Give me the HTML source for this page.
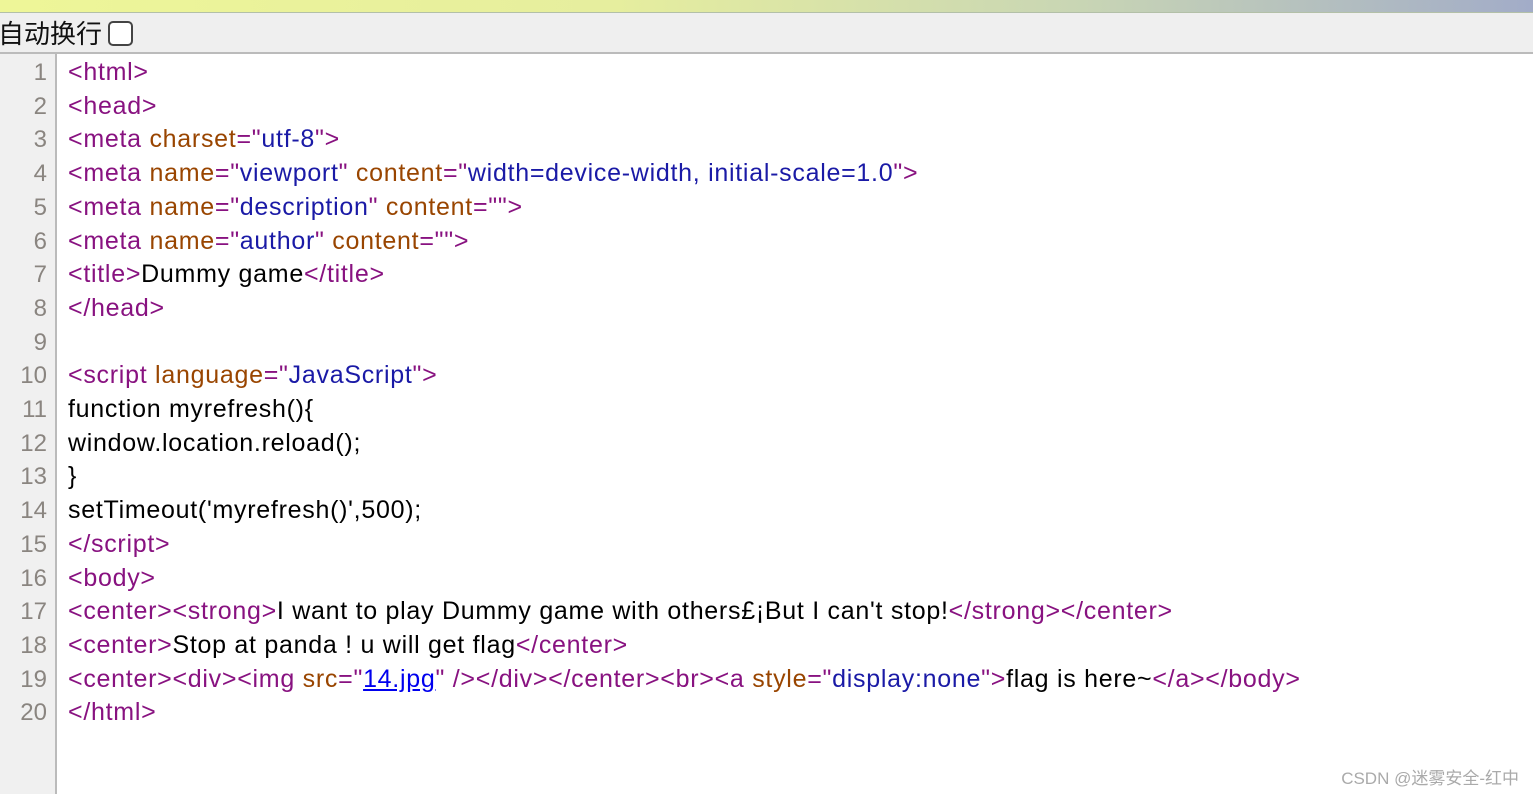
<!DOCTYPE html>
<html><head><meta charset="utf-8"><style>
body{margin:0;width:1533px;height:794px;overflow:hidden;background:#fff;font-family:"Liberation Sans","Noto Sans CJK SC",sans-serif;position:relative}
.top{position:absolute;left:0;top:0;width:1533px;height:12px;background:linear-gradient(90deg,#eef698 0%,#e6ee9e 40%,#c9d6b4 70%,#a2acc8 100%);border-bottom:1px solid #b3c0a8}
.bar{position:absolute;left:0;top:13px;width:1533px;height:39px;background:#efefef;border-bottom:2px solid #bbb}
.bar span{position:absolute;left:-2px;top:5px;font-size:26px;color:#111;font-family:"Noto Sans CJK SC",sans-serif;line-height:30px}
.cb{position:absolute;left:108px;top:8px;width:25px;height:25px;border:2px solid #444;border-radius:5px;box-sizing:border-box;background:#fff}
.gut{position:absolute;left:0;top:54px;width:55px;height:740px;background:#f0f0f0;border-right:2px solid #bbb}
.nums,.code{position:absolute;top:56px;font-size:25px;line-height:33.7px;white-space:pre}
.nums{left:0;width:47px;text-align:right;color:#8a8580;font-size:24px}
.code{left:68px;color:#000;letter-spacing:0.72px}
.t{color:#881280}.a{color:#994500}.v{color:#1a1aa6}
.l{color:#00e;text-decoration:underline}
.wm{position:absolute;right:14px;top:764px;font-size:17px;color:#aaa;font-family:"Liberation Sans","Noto Sans CJK SC",sans-serif}
</style></head><body>
<div class="top"></div>
<div class="bar"><span>自动换行</span><div class="cb"></div></div>
<div class="gut"></div>
<div class="nums">1
2
3
4
5
6
7
8
9
10
11
12
13
14
15
16
17
18
19
20</div>
<div class="code"><span class="t">&lt;html&gt;</span>
<span class="t">&lt;head&gt;</span>
<span class="t">&lt;meta </span><span class="a">charset</span><span class="t">="</span><span class="v">utf-8</span><span class="t">"&gt;</span>
<span class="t">&lt;meta </span><span class="a">name</span><span class="t">="</span><span class="v">viewport</span><span class="t">" </span><span class="a">content</span><span class="t">="</span><span class="v">width=device-width, initial-scale=1.0</span><span class="t">"&gt;</span>
<span class="t">&lt;meta </span><span class="a">name</span><span class="t">="</span><span class="v">description</span><span class="t">" </span><span class="a">content</span><span class="t">=""&gt;</span>
<span class="t">&lt;meta </span><span class="a">name</span><span class="t">="</span><span class="v">author</span><span class="t">" </span><span class="a">content</span><span class="t">=""&gt;</span>
<span class="t">&lt;title&gt;</span>Dummy game<span class="t">&lt;/title&gt;</span>
<span class="t">&lt;/head&gt;</span>

<span class="t">&lt;script </span><span class="a">language</span><span class="t">="</span><span class="v">JavaScript</span><span class="t">"&gt;</span>
function myrefresh(){
window.location.reload();
}
setTimeout('myrefresh()',500);
<span class="t">&lt;/script&gt;</span>
<span class="t">&lt;body&gt;</span>
<span class="t">&lt;center&gt;&lt;strong&gt;</span>I want to play Dummy game with others£¡But I can't stop!<span class="t">&lt;/strong&gt;&lt;/center&gt;</span>
<span class="t">&lt;center&gt;</span>Stop at panda ! u will get flag<span class="t">&lt;/center&gt;</span>
<span class="t">&lt;center&gt;&lt;div&gt;&lt;img </span><span class="a">src</span><span class="t">="</span><span class="l">14.jpg</span><span class="t">" /&gt;&lt;/div&gt;&lt;/center&gt;&lt;br&gt;&lt;a </span><span class="a">style</span><span class="t">="</span><span class="v">display:none</span><span class="t">"&gt;</span>flag is here~<span class="t">&lt;/a&gt;&lt;/body&gt;</span>
<span class="t">&lt;/html&gt;</span></div>
<div class="wm">CSDN @迷雾安全-红中</div>
</body></html>
